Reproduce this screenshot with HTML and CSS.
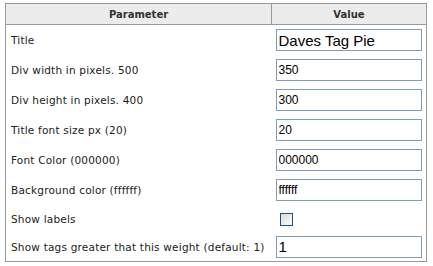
FILE: index.html
```html
<!DOCTYPE html>
<html lang="en">
<head>
	<meta charset="UTF-8">
	<title>Settings</title>
	<link rel="stylesheet" href="styles.css">
</head>
<body>
<table id="params">
	<thead>
		<tr>
			<th class="col-name">Parameter</th>
			<th class="col-value">Value</th>
		</tr>
	</thead>
	<tbody>
		<tr>
			<td class="label">Title</td>
			<td><input type="text" class="field big" value="Daves Tag Pie"></td>
		</tr>
		<tr>
			<td class="label">Div width in pixels. 500</td>
			<td><input type="text" class="field" value="350"></td>
		</tr>
		<tr>
			<td class="label">Div height in pixels. 400</td>
			<td><input type="text" class="field" value="300"></td>
		</tr>
		<tr>
			<td class="label">Title font size px (20)</td>
			<td><input type="text" class="field" value="20"></td>
		</tr>
		<tr>
			<td class="label">Font Color (000000)</td>
			<td><input type="text" class="field" value="000000"></td>
		</tr>
		<tr>
			<td class="label">Background color (ffffff)</td>
			<td><input type="text" class="field" value="ffffff"></td>
		</tr>
		<tr class="check-row">
			<td class="label">Show labels</td>
			<td><span class="check"></span></td>
		</tr>
		<tr class="last-row">
			<td class="label">Show tags greater that this weight (default: 1)</td>
			<td><input type="text" class="field big" value="1"></td>
		</tr>
	</tbody>
</table>
</body>
</html>
```

FILE: styles.css
```css
*{margin: 0;padding: 0}
body{
	background: #fff;
	font-family: "DejaVu Sans", Verdana, sans-serif;
}
#params{
	width: 422px;
	margin: 3px 0 0 5px;
	border: 1px solid #999;
	border-collapse: collapse;
	table-layout: fixed;
}
#params th{
	height: 20px;
	background: #ececec;
	border-bottom: 1px solid #999;
	font-size: 10px;
	font-weight: bold;
	color: #333;
	text-align: center;
	vertical-align: middle;
}
#params th.col-name{
	width: 265px;
	border-right: 1px solid #999;
}
#params td{
	height: 30px;
	padding: 0;
	vertical-align: middle;
}
#params td.label{
	padding-left: 5px;
	font-size: 10.5px;
	letter-spacing: 0.2px;
	color: #222;
	white-space: nowrap;
}
#params tr.check-row td{
	height: 27px;
}
#params tr.last-row td{
	height: 29px;
}
.field{
	display: block;
	box-sizing: border-box;
	width: 146px;
	height: 22px;
	margin-left: 4px;
	padding: 0 2px;
	border: 1px solid #7f9db9;
	outline: none;
	font: 12px "Liberation Sans", Arial, sans-serif;
	color: #000;
	background: #fff;
}
.field.big{
	font-size: 15px;
}
.check{
	display: block;
	box-sizing: border-box;
	width: 13px;
	height: 13px;
	margin: 1px 0 0 8px;
	border: 1px solid #1c5180;
	background: linear-gradient(135deg, #dcdcd7, #fbfbf9);
}
```
